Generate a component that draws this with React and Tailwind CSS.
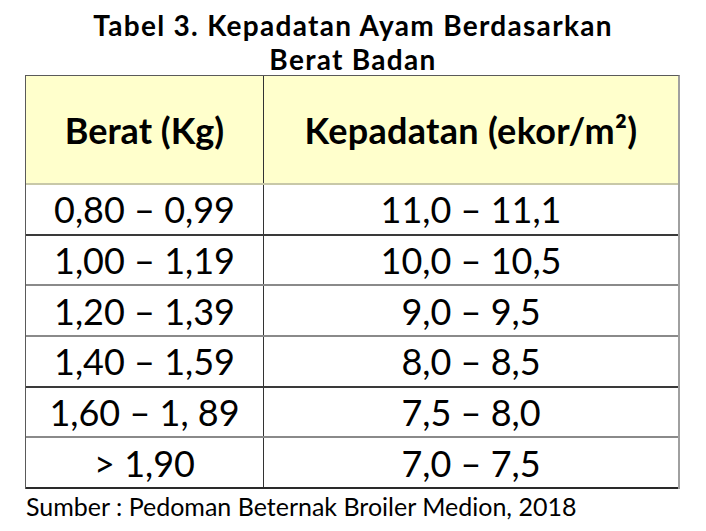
const rows = [
  ["0,80 – 0,99", "11,0 – 11,1", "border-[#3a3a3a]"],
  ["1,00 – 1,19", "10,0 – 10,5", "border-[#8a8a8a]"],
  ["1,20 – 1,39", "9,0 – 9,5", "border-[#8a8a8a]"],
  ["1,40 – 1,59", "8,0 – 8,5", "border-[#3a3a3a]"],
  ["1,60 – 1, 89", "7,5 – 8,0", "border-[#8a8a8a]"],
  ["> 1,90", "7,0 – 7,5", "border-[#2a2a2a]"],
]

export default function App() {
  return (
    <div className="w-[706px] h-[531px] bg-white text-black font-['Lato',sans-serif] overflow-hidden">
      {/* Title */}
      <div className="pt-[8px] h-[75px] text-center font-bold text-[28px] leading-[34px] tracking-[1.3px]">
        <div>Tabel 3. Kepadatan Ayam Berdasarkan</div>
        <div>Berat Badan</div>
      </div>

      {/* Table */}
      <div className="ml-[25px] w-[655px] border-t border-l border-[#5a5a5a] border-r-2 border-r-[#a0a0a0]">
        <div className="flex h-[109px] bg-[#ffffcc] border-b-2 border-[#c8c8a8] font-bold text-[36px]">
          <div className="w-[238px] border-r border-[#333] flex items-center justify-center">Berat (Kg)</div>
          <div className="flex-1 flex items-center justify-center tracking-[0.3px]">Kepadatan (ekor/m²)</div>
        </div>
        {rows.map(([a, b, line]) => (
          <div key={a} className={"flex h-[50.7px] border-b-2 text-[36px] " + line}>
            <div className="w-[238px] border-r border-[#333] flex items-center justify-center">{a}</div>
            <div className="flex-1 flex items-center justify-center">{b}</div>
          </div>
        ))}
      </div>

      <div className="ml-[26px] mt-[2px] text-[25px] leading-[30px]">Sumber : Pedoman Beternak Broiler Medion, 2018</div>
    </div>
  )
}
